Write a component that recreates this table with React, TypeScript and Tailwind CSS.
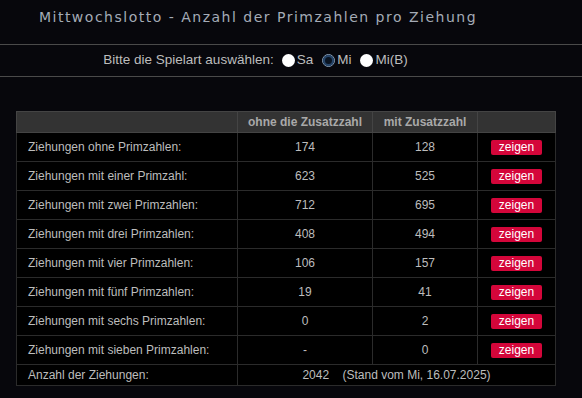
import React from "react";

const rows = [
  ["Ziehungen ohne Primzahlen:", "174", "128"],
  ["Ziehungen mit einer Primzahl:", "623", "525"],
  ["Ziehungen mit zwei Primzahlen:", "712", "695"],
  ["Ziehungen mit drei Primzahlen:", "408", "494"],
  ["Ziehungen mit vier Primzahlen:", "106", "157"],
  ["Ziehungen mit fünf Primzahlen:", "19", "41"],
  ["Ziehungen mit sechs Primzahlen:", "0", "2"],
  ["Ziehungen mit sieben Primzahlen:", "-", "0"],
];

function Radio({ label, checked }: { label: string; checked?: boolean }) {
  return (
    <label className="flex items-center gap-[2px] mr-[9px]">
      {checked ? (
        <span className="w-[13px] h-[13px] rounded-full border border-[#8aa0b8] bg-[#0d1a2a] flex items-center justify-center">
          <span className="w-[11px] h-[11px] rounded-full border-[2px] border-[#27466b] bg-[#0a1422]" />
        </span>
      ) : (
        <span className="w-[13px] h-[13px] rounded-full bg-white" />
      )}
      <span>{label}</span>
    </label>
  );
}

export default function App() {
  return (
    <div className="w-[582px] h-[398px] bg-[#07070c] text-[#bdbdbd] font-['Liberation_Sans',Arial,sans-serif] overflow-hidden">
      <h1 className="h-[44px] pt-[7px] pr-[66px] text-center font-['DejaVu_Sans',Verdana,sans-serif] text-[14px] tracking-[1.5px] text-[#a4abb6]">
        Mittwochslotto - Anzahl der Primzahlen pro Ziehung
      </h1>
      <div className="border-t border-b border-[#4a4a4a] h-[33px] flex items-center justify-center pr-[62px] text-[13.5px]">
        <span className="mr-[8px]">Bitte die Spielart auswählen:</span>
        <Radio label="Sa" />
        <Radio label="Mi" checked />
        <Radio label="Mi(B)" />
      </div>
      <div className="pt-[34px] pl-[16px]">
        <table className="border-collapse bg-black text-[12px] border border-[#333]">
          <thead>
            <tr className="bg-[#333] h-[21px] font-bold text-[#a9a9a9]">
              <th className="w-[221px] border border-[#444]"></th>
              <th className="w-[135px] border border-[#444] font-bold">ohne die Zusatzzahl</th>
              <th className="w-[105px] border border-[#444] font-bold">mit Zusatzzahl</th>
              <th className="w-[78px] border border-[#444]"></th>
            </tr>
          </thead>
          <tbody>
            {rows.map(([label, a, b]) => (
              <tr key={label} className="h-[29px]">
                <td className="pl-[11px] border border-[#2b2b2b]">{label}</td>
                <td className="text-center border border-[#2b2b2b]">{a}</td>
                <td className="text-center border border-[#2b2b2b]">{b}</td>
                <td className="text-center border border-[#2b2b2b]">
                  <span className="inline-block w-[51px] h-[15px] leading-[15px] rounded-[2px] bg-[#d4063a] text-white text-[12px] align-middle">
                    zeigen
                  </span>
                </td>
              </tr>
            ))}
            <tr className="h-[21px]">
              <td className="pl-[11px] border border-[#2b2b2b]">Anzahl der Ziehungen:</td>
              <td colSpan={3} className="text-center border border-[#2b2b2b] whitespace-pre">
                {"2042    (Stand vom Mi, 16.07.2025)"}
              </td>
            </tr>
          </tbody>
        </table>
      </div>
    </div>
  );
}
